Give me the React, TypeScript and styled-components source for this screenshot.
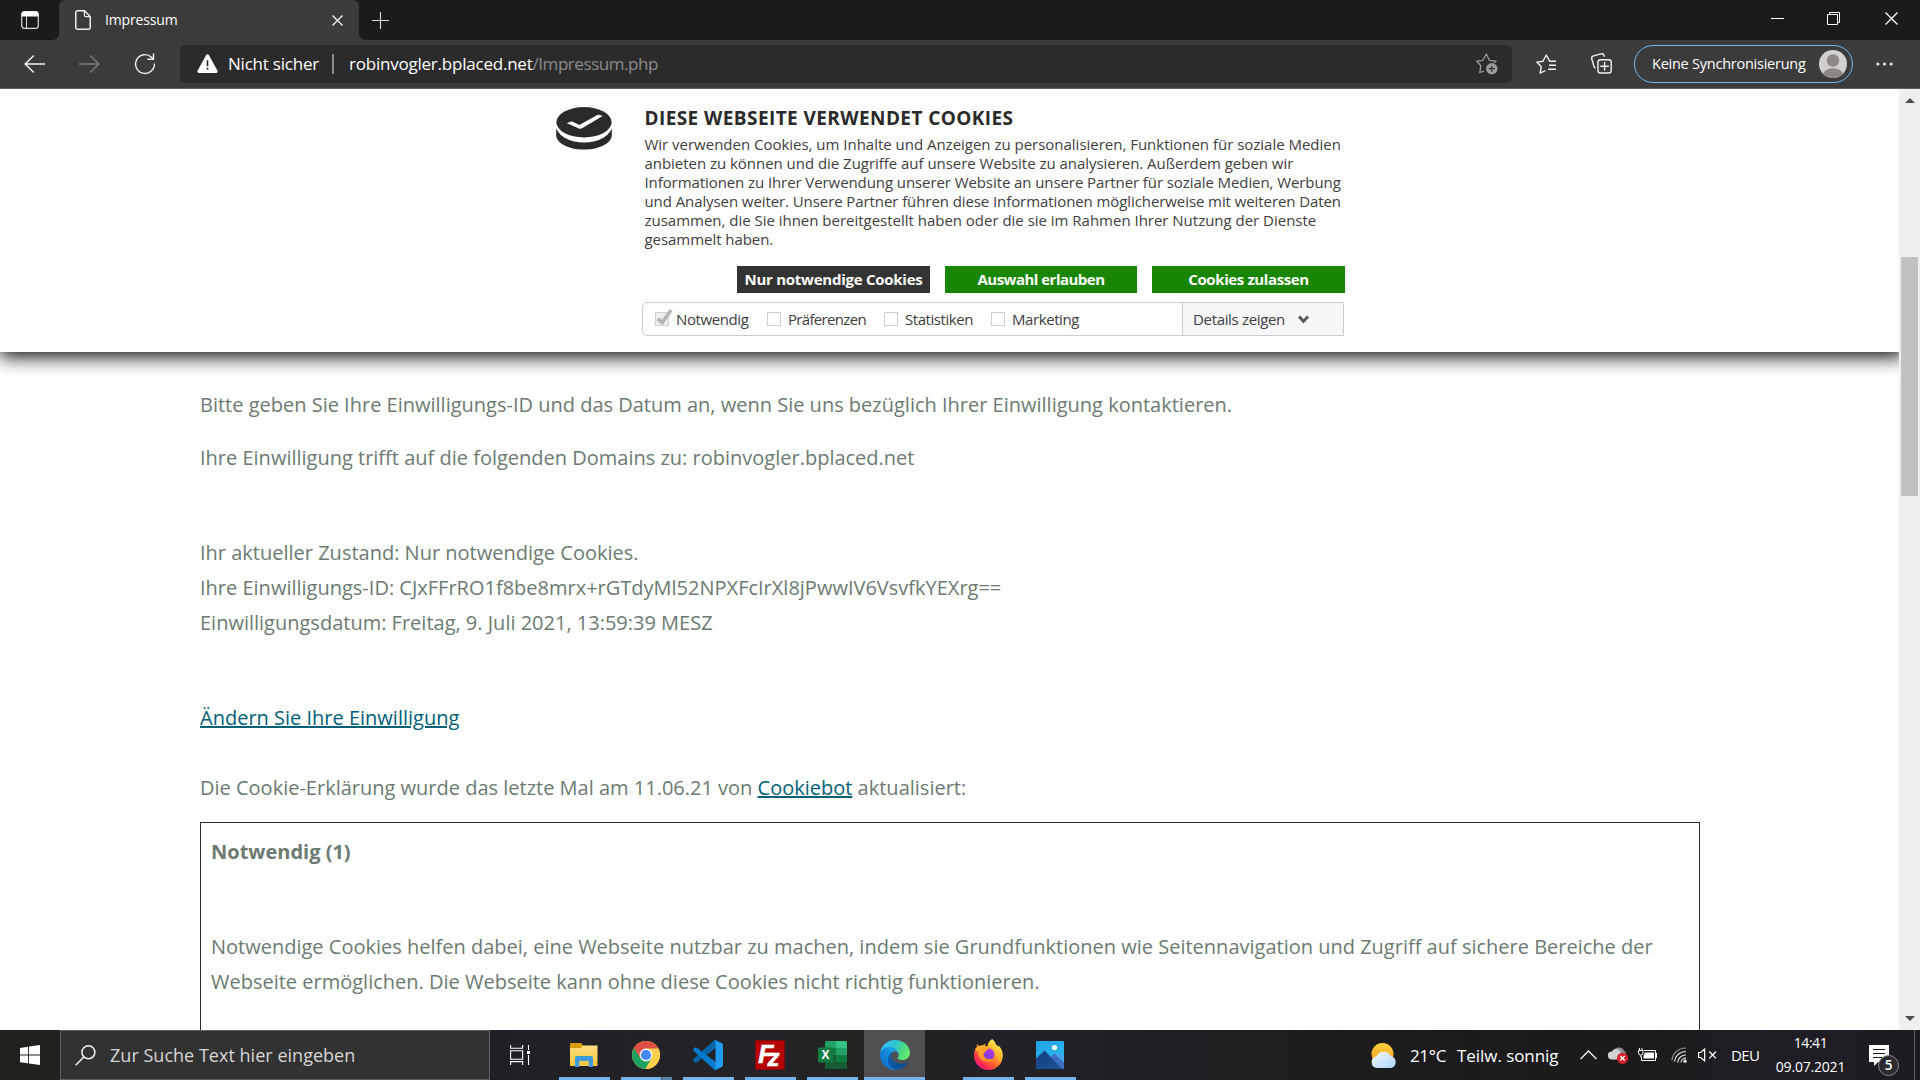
import React from "react";
import styled, { createGlobalStyle } from "styled-components";

const GlobalStyle = createGlobalStyle`
  *, *::before, *::after { box-sizing: border-box; }
  html, body { margin: 0; padding: 0; overflow: hidden; }
  body { font-family: "Open Sans", "Noto Sans", sans-serif; background: #fff; }
  p, h1, h2 { margin: 0; }
  svg { display: block; flex: none; overflow: visible; }
`;

const Screen = styled.div`
  width: 1920px;
  height: 1080px;
  display: flex;
  flex-direction: column;
  overflow: hidden;
`;

const Label = styled.span<{ $size: number; $track?: number; $color?: string }>`
  font-size: ${(p) => p.$size}px;
  letter-spacing: ${(p) => p.$track ?? 0}px;
  color: ${(p) => p.$color ?? "#fff"};
  white-space: nowrap;
`;

/* ---------- Browser chrome ---------- */

const TabStrip = styled.header`
  height: 40px;
  flex: none;
  display: flex;
  background: #1b1b1b;
`;

const TabActions = styled.div`
  width: 59px;
  display: flex;
  align-items: center;
  padding-left: 21px;
`;

const Tab = styled.div`
  position: relative;
  width: 300px;
  display: flex;
  align-items: center;
  padding: 0 16px 0 16px;
  background: #3b3b3b;
  border-radius: 6px 6px 0 0;
  &::before,
  &::after {
    content: "";
    position: absolute;
    bottom: 0;
    width: 6px;
    height: 6px;
  }
  &::before {
    left: -6px;
    background: radial-gradient(circle at 0 0, transparent 5.5px, #3b3b3b 6px);
  }
  &::after {
    right: -6px;
    background: radial-gradient(circle at 100% 0, transparent 5.5px, #3b3b3b 6px);
  }
`;

const TabTitle = styled(Label)`
  margin-left: 14px;
  padding-bottom: 2px;
  flex: 1;
`;

const NewTab = styled.div`
  display: flex;
  align-items: center;
  padding-left: 13px;
`;

const WindowControls = styled.div`
  margin-left: auto;
  display: flex;
  align-items: center;
  gap: 43px;
  padding: 0 22px 3px 0;
`;

const CloseSlot = styled.div`
  margin-left: 2px;
`;

const Toolbar = styled.nav`
  height: 49px;
  flex: none;
  display: flex;
  align-items: center;
  padding: 0 27px 1px 24px;
  background: #3b3b3b;
  border-bottom: 1px solid #606060;
`;

const NavButtons = styled.div`
  width: 156px;
  display: flex;
  align-items: center;
  gap: 34px;
`;

const AddressBar = styled.div`
  width: 1332px;
  height: 38px;
  display: flex;
  align-items: center;
  padding: 0 14px 0 17px;
  background: #2b2b2b;
  border-radius: 5px;
`;

const Insecure = styled(Label)`
  margin-left: 10px;
`;

const Separator = styled.span`
  width: 2px;
  height: 20px;
  margin: 0 15px 0 13px;
  background: #8a8a8a;
`;

const StarSlot = styled.div`
  margin-left: auto;
`;

const ToolbarActions = styled.div`
  flex: 1;
  display: flex;
  align-items: center;
  padding-left: 24px;
`;

const Collections = styled.div`
  margin-left: 34px;
`;

const Profile = styled.div`
  width: 219px;
  height: 38px;
  margin-left: 22px;
  margin-right: auto;
  display: flex;
  align-items: center;
  justify-content: space-between;
  padding: 0 5px 0 17px;
  border: 1px solid #76b9ed;
  border-radius: 19px;
`;

/* ---------- Page ---------- */

const Viewport = styled.div`
  flex: 1;
  min-height: 0;
  display: flex;
  background: #fff;
`;

const Page = styled.div`
  width: 1899px;
  overflow: hidden;
`;

const Banner = styled.section`
  position: relative;
  height: 263px;
  display: flex;
  padding: 18px 0 0 556px;
  background: #fff;
  box-shadow: 2.5px 2.5px 17.5px 2.5px #121212;
`;

const BannerBody = styled.div`
  width: 703px;
  margin-left: 30px;
`;

const BannerTitle = styled.h2`
  padding-left: 2.5px;
  font-size: 19px;
  line-height: 24px;
  font-weight: 700;
  letter-spacing: 0.41px;
  color: #2a2a2a;
  margin-top: -1px;
  white-space: nowrap;
`;

const BannerText = styled.p`
  padding-left: 2.5px;
  margin-top: 5px;
  color: #404040;
`;

const BannerLine = styled.span<{ $track: number }>`
  display: block;
  font-size: 15px;
  line-height: 19px;
  letter-spacing: ${(p) => p.$track}px;
  white-space: nowrap;
`;

const ButtonRow = styled.div`
  display: flex;
  justify-content: flex-end;
  gap: 15px;
  margin-top: 17px;
`;

const ConsentButton = styled.button<{ $dark?: boolean; $width: number; $track: number }>`
  width: ${(p) => p.$width}px;
  height: 27px;
  padding: 0 0 1px;
  border: 0;
  background: ${(p) => (p.$dark ? "#333" : "#188600")};
  color: #fff;
  font: 700 15px/26px "Open Sans", "Noto Sans", sans-serif;
  letter-spacing: ${(p) => p.$track}px;
  white-space: nowrap;
`;

const Options = styled.div`
  width: 702px;
  height: 34px;
  margin-top: 9px;
  display: flex;
  border: 1px solid #ccc;
  border-radius: 5px 0 0 5px;
`;

const Checks = styled.div`
  flex: 1;
  display: flex;
  align-items: center;
  padding-left: 12px;
`;

const Check = styled.label<{ $width: number; $gap: number }>`
  width: ${(p) => p.$width}px;
  display: flex;
  align-items: center;
  gap: ${(p) => p.$gap}px;
`;

const Details = styled.div`
  width: 161px;
  display: flex;
  align-items: center;
  gap: 13px;
  padding-left: 10px;
  background: #f6f6f9;
  border-left: 1px solid #ccc;
`;

const Declaration = styled.main`
  width: 1500px;
  margin-left: 200px;
  padding-top: 35px;
  font-size: 20px;
  line-height: 35px;
  color: #6c7a72;
`;

const Paragraph = styled.p<{ $top?: number }>`
  margin-top: ${(p) => p.$top ?? 0}px;
`;

const Link = styled.a`
  color: #006078;
  text-decoration: underline;
`;

const CategoryBox = styled.section`
  margin-top: 17px;
  height: 300px;
  padding: 11px 10px;
  border: 1px solid #2a2a2a;
`;

const CategoryTitle = styled.p`
  font-weight: 700;
`;

const Scrollbar = styled.div`
  width: 21px;
  display: flex;
  flex-direction: column;
  align-items: center;
  padding: 9px 0 9px;
  background: #f0f0f0;
`;

const Thumb = styled.div`
  width: 17px;
  height: 239px;
  margin: 154px 0 auto;
  background: #c1c1c1;
`;

/* ---------- Taskbar ---------- */

const Taskbar = styled.footer`
  height: 50px;
  flex: none;
  display: flex;
  background: linear-gradient(90deg, #22211e 0, #22211e 60px, #1f1f26 490px, #242428 780px, #232320 850px, #212127 1000px, #1c1c1d 1400px, #1b1b1c 1620px, #201e25 1800px, #1d1b20 100%);
`;

const Start = styled.div`
  width: 60px;
  display: flex;
  align-items: center;
  justify-content: center;
`;

const Search = styled.div`
  width: 430px;
  display: flex;
  align-items: center;
  gap: 14px;
  padding-left: 14px;
  background: #323232;
  border: 1px solid #5f5f5f;
`;

const TaskView = styled.div`
  width: 63px;
  display: flex;
  align-items: center;
  padding-left: 20px;
`;

const AppSlot = styled.div<{ $active?: boolean; $before?: number }>`
  width: ${(p) => (p.$active ? 61 : 62)}px;
  margin-left: ${(p) => p.$before ?? 0}px;
  display: flex;
  flex-direction: column;
  align-items: center;
  background: ${(p) => (p.$active ? "#505053" : "transparent")};
`;

const AppIcon = styled.div`
  flex: 1;
  display: flex;
  align-items: center;
  padding-top: 2px;
`;

const Underline = styled.div<{ $wide?: boolean; $stacked?: boolean }>`
  width: ${(p) => (p.$wide ? 61 : 51)}px;
  height: 3px;
  background: ${(p) => (p.$stacked ? "linear-gradient(90deg, #76b3ea 40px, #41546a 40px, #41546a 41px, #5784ab 41px)" : "#76b3ea")};
`;

const Tray = styled.div`
  margin-left: auto;
  display: flex;
  align-items: center;
`;

const Weather = styled.div`
  width: 209px;
  display: flex;
  align-items: center;
`;

const Slot = styled.div<{ $width: number }>`
  width: ${(p) => p.$width}px;
  display: flex;
  align-items: center;
`;

const Clock = styled.div`
  width: 69px;
  display: flex;
  flex-direction: column;
  align-items: center;
  line-height: 24px;
`;

const Notifications = styled.div`
  position: relative;
  width: 45px;
  height: 50px;
  margin-left: 24px;
  padding-top: 15px;
`;

const Badge = styled.span`
  position: absolute;
  left: 9px;
  top: 25px;
  width: 21px;
  height: 21px;
  border-radius: 50%;
  border: 1px solid #8c8c8c;
  background: #2b2b2d;
  color: #fff;
  font-size: 13.5px;
  line-height: 18px;
  font-weight: 600;
  text-align: center;
`;

const ShowDesktop = styled.div`
  width: 6px;
  height: 50px;
  border-left: 1px solid #606060;
`;

/* ---------- Icons ---------- */

const TabActionsIcon = () => (
  <svg width="18" height="18" viewBox="0 0 18 18" fill="none" stroke="#fff">
    <rect x="0.7" y="0.7" width="16.6" height="16.6" rx="2.8" stroke="#ddd" strokeWidth="1.2" />
    <path d="M1 5V3a2 2 0 0 1 2-2h12a2 2 0 0 1 2 2v2z" fill="#fff" />
    <path d="M5.5 5v12" stroke="#ddd" />
  </svg>
);

const FileIcon = () => (
  <svg width="16" height="20" viewBox="0 0 16 20" fill="none" stroke="#eee" strokeWidth="1.5">
    <path d="M2.6.8h7l5.6 5.7v11.1a1.7 1.7 0 0 1-1.7 1.7H2.5a1.7 1.7 0 0 1-1.7-1.7V2.5A1.7 1.7 0 0 1 2.6.8z" />
    <path d="M9.4 1v4.3a1.4 1.4 0 0 0 1.4 1.4H15" strokeWidth="1.2" />
  </svg>
);

const CrossIcon = ({ size, width = 1.2 }: { size: number; width?: number }) => (
  <svg width={size} height={size} viewBox={`0 0 ${size} ${size}`} stroke="#fff" strokeWidth={width}>
    <path d={`M.5.5L${size - 0.5} ${size - 0.5}M${size - 0.5} .5L.5 ${size - 0.5}`} />
  </svg>
);

const PlusIcon = () => (
  <svg width="17" height="17" viewBox="0 0 17 17" stroke="#ddd" strokeWidth="1.1">
    <path d="M8.5 0v17M0 8.5h17" />
  </svg>
);

const MinimizeIcon = () => (
  <svg width="13" height="13" viewBox="0 0 13 13" stroke="#fff">
    <path d="M0 6.5h13" />
  </svg>
);

const RestoreIcon = () => (
  <svg width="13" height="13" viewBox="0 0 13 13" fill="none" stroke="#fff">
    <path d="M.5 2.5h10v10H.5zM2.5 2.500V.5h10v10h-2" />
  </svg>
);

const ArrowIcon = ({ forward }: { forward?: boolean }) => (
  <svg width="21" height="18" viewBox="0 0 21 18" fill="none" stroke={forward ? "#7b7b7b" : "#f3f3f3"} strokeWidth="1.5">
    {forward ? <path d="M0 9h20M11.200.5L19.8 9l-8.600 8.500" /> : <path d="M21 9H1M9.800.5L1.200 9l8.600 8.500" />}
  </svg>
);

const ReloadIcon = () => (
  <svg width="22" height="21" viewBox="0 0 22 21" fill="none" stroke="#f0f0f0" strokeWidth="1.4">
    <path d="M20.400 10.500A9.400 9.400 0 1 1 17.500 4.200L19.400 6" />
    <path d="M13.300 6.200h6.200V.4" />
  </svg>
);

const WarningIcon = () => (
  <svg width="21" height="19" viewBox="0 0 21 19">
    <path d="M9.200.9a1.500 1.500 0 0 1 2.600 0l8.700 15.800a1.500 1.500 0 0 1-1.300 2.200H1.800a1.500 1.500 0 0 1-1.300-2.200z" fill="#fff" />
    <path d="M9.700 6.200h1.600v6H9.700zM9.600 13.700h1.800v1.800H9.600z" fill="#2b2b2b" />
  </svg>
);

const StarAddIcon = () => (
  <svg width="22" height="22" viewBox="0 0 22 22" fill="none" stroke="#9b9b9b" strokeWidth="1.300" strokeLinejoin="round">
    <path d="M8 18.200l-4.200 1.300 1-6.800L.8 8.200l6-.9L10.300 1l3 6.300 6.700.9-1.600 1.500" />
    <circle cx="15.800" cy="15.700" r="5.700" fill="#9b9b9b" stroke="none" />
    <path d="M15.800 12.700v6M12.800 15.700h6" stroke="#2b2b2b" strokeWidth="1.200" />
  </svg>
);

const FavoritesIcon = () => (
  <svg width="21" height="20" viewBox="0 0 21 20" fill="none" stroke="#f2f2f2" strokeWidth="1.400" strokeLinejoin="round">
    <path d="M20 7.200h-6.300L10.200 1 7 7.200l-6.200.9 4.500 4.600-1.100 6.500 5.300-2.700" />
    <path d="M13 11.200h7M12 15.300h8" />
  </svg>
);

const CollectionsIcon = () => (
  <svg width="21" height="21" viewBox="0 0 21 21" fill="none" stroke="#f2f2f2" strokeWidth="1.400" strokeLinejoin="round">
    <path d="M4.600 15.200a2.500 2.500 0 0 1-1.600-1.800L.8 6a2.600 2.600 0 0 1 1.800-3.200L9.800.9a2.600 2.600 0 0 1 3.200 1.800l.3 1" />
    <rect x="7" y="6.700" width="13.200" height="13.300" rx="2.600" />
    <path d="M13.600 9v8.600M9.300 13.300h8.600" />
  </svg>
);

const Avatar = () => (
  <svg width="28" height="28" viewBox="0 0 28 28">
    <clipPath id="avatar"><circle cx="14" cy="14" r="14" /></clipPath>
    <g clipPath="url(#avatar)">
      <rect width="28" height="28" fill="#d2d0ce" />
      <circle cx="14" cy="10.500" r="6.200" fill="#8d8884" />
      <ellipse cx="14" cy="26" rx="10.500" ry="7.800" fill="#8d8884" />
    </g>
  </svg>
);

const MoreIcon = () => (
  <svg width="17" height="4" viewBox="0 0 17 4" fill="#eee">
    <circle cx="1.900" cy="2" r="1.500" /><circle cx="8.500" cy="2" r="1.500" /><circle cx="15.100" cy="2" r="1.500" />
  </svg>
);

const CookiebotLogo = () => (
  <svg width="56" height="43" viewBox="0 0 56 43">
    <path d="M.2 21.500c3 6.500 14 9.700 27.800 9.700s25-3.200 27.800-9.700v6.500c0 8-12 14.600-27.800 14.600S.2 36 .2 28z" fill="#2a2a2a" />
    <ellipse cx="28" cy="18.500" rx="27.900" ry="17" fill="#fff" />
    <ellipse cx="28" cy="15.200" rx="27.600" ry="15.200" fill="#2a2a2a" />
    <path d="M10.800 16.200l3.600-1.500c.8-.3 1.600-.2 2.300.1l6.600 3.200 18-10c.7-.4 1.600-.4 2.300-.1l3 1.200-20.500 12.200c-1 .6-2.100.6-3.100.2z" fill="#fff" />
  </svg>
);

const CheckboxIcon = ({ checked }: { checked?: boolean }) => (
  <svg width={checked ? 18 : 15} height="15" viewBox={`0 0 ${checked ? 18 : 15} 15`} fill="none">
    <rect x="0.500" y="0.500" width="13" height="13" fill={checked ? "#eee" : "#fff"} stroke="#d0d0d0" />
    {checked && <path d="M2.800 6.600L7.200 10.600L16.200 -2" stroke="#b5b5b5" strokeWidth="3.600" />}
  </svg>
);

const DetailsChevron = () => (
  <svg width="11" height="9" viewBox="0 0 11 9" fill="none" stroke="#5a5a5a" strokeWidth="3">
    <path d="M1 1.500l4.500 4.800L10 1.500" />
  </svg>
);

const ScrollArrow = ({ down }: { down?: boolean }) => (
  <svg width="10" height="5" viewBox="0 0 10 5" fill="#505050">
    <path d={down ? "M0 0h10L5 5z" : "M0 5h10L5 0z"} />
  </svg>
);

const WindowsIcon = () => (
  <svg width="20" height="20" viewBox="0 0 20 20" fill="#fff">
    <path d="M0 2.900l8.100-1.200v7.800H0zM9 1.500L20 0v9.500H9zM0 10.400h8.100v7.900L0 17.200zM9 10.400h11V20L9 18.500z" />
  </svg>
);

const SearchIcon = () => (
  <svg width="21" height="21" viewBox="0 0 21 21" fill="none" stroke="#f2f2f2" strokeWidth="1.500">
    <circle cx="13.400" cy="7.300" r="6.500" />
    <path d="M8.800 12L.6 20.300" />
  </svg>
);

const TaskViewIcon = () => (
  <svg width="21" height="20" viewBox="0 0 21 20" fill="none" stroke="#fff" strokeWidth="1.100">
    <path d="M.6 0v3.300h12V0M.6 20v-3.400h12V20M.6 5.700h12v8.600H.6zM18.500 0v5M18.500 10v10" />
    <path d="M17 6h3v3h-3z" fill="#fff" stroke="none" />
  </svg>
);

const ExplorerIcon = () => (
  <svg width="28" height="24" viewBox="0 0 28 24">
    <defs>
      <linearGradient id="folder" x1="0" y1="0" x2="0" y2="1"><stop offset="0" stopColor="#ffe083" /><stop offset="1" stopColor="#f8c33c" /></linearGradient>
    </defs>
    <path d="M0 1a1 1 0 0 1 1-1h10l2 2v4H0z" fill="#dc9a0a" />
    <path d="M0 5h11l2-2.500h14.500V23H0z" fill="url(#folder)" />
    <path d="M5 24V15a2 2 0 0 1 2-2h14a2 2 0 0 1 2 2v9h-4.500v-5.500h-9V24z" fill="#3e9bdc" />
    <path d="M9.500 18h9v5h-9z" fill="#f7c948" />
  </svg>
);

const ChromeIcon = () => (
  <svg width="28" height="28" viewBox="0 0 28 28">
    <circle cx="14" cy="14" r="14" fill="#fdd04b" />
    <path d="M1.900 7A14 14 0 0 0 13.500 28l6-10.800L14 14z" fill="#1ba160" />
    <path d="M14 7.500h12.400A14 14 0 0 1 13.500 28l6.200-10.500z" fill="#fdd04b" />
    <path d="M14 7.600L26.400 7.600A14 14 0 0 0 1.900 7l6.400 10.300z" fill="#dd4f43" />
    <circle cx="14" cy="14" r="6.500" fill="#f5f5f5" />
    <circle cx="14" cy="14" r="5.100" fill="#4688f4" />
  </svg>
);

const CodeIcon = () => (
  <svg width="30" height="30" viewBox="0 0 100 100">
    <path d="M96.500 10.800L76 1a6.200 6.200 0 0 0-7.100 1.200L1.300 63.600a4.200 4.200 0 0 0 0 6.200l5.500 5a4.200 4.200 0 0 0 5.300.2L93.400 13.400C96.100 11.300 100 13.300 100 16.700v-.2a6.200 6.200 0 0 0-3.500-5.700z" fill="#0065a9" />
    <path d="M96.500 89.200L76 99a6.200 6.200 0 0 1-7.100-1.200L1.300 36.200a4.200 4.200 0 0 1 0-6.200l5.500-5a4.200 4.200 0 0 1 5.300-.2l81.300 61.700c2.700 2.100 6.600.1 6.600-3.300v.2a6.200 6.200 0 0 1-3.500 5.800z" fill="#007acc" />
    <path d="M76 99a6.200 6.200 0 0 1-7.100-1.200c2.300 2.300 6.200.7 6.200-2.600V4.800c0-3.300-3.900-4.900-6.200-2.600A6.200 6.200 0 0 1 76 1l20.500 9.800a6.200 6.200 0 0 1 3.500 5.700v67a6.200 6.200 0 0 1-3.500 5.700z" fill="#1f9cf0" />
  </svg>
);

const FileZillaText = styled.text<{ $size: number }>`
  font: italic 700 ${(p) => p.$size}px "Liberation Sans", Arial, sans-serif;
  fill: #fff;
  stroke: #fff;
  stroke-width: 0.6px;
`;

const FileZillaIcon = () => (
  <svg width="30" height="30" viewBox="0 0 30 30">
    <rect x="0.500" y="0.500" width="29" height="29" fill="#b50000" stroke="#8c0000" strokeDasharray="2 1.500" />
    <FileZillaText $size={25} x="3.200" y="22.800">F</FileZillaText>
    <FileZillaText $size={24} x="12.500" y="26.300">z</FileZillaText>
  </svg>
);

const ExcelLetter = styled.text`
  font: 700 12px "Open Sans", sans-serif;
  fill: #fff;
`;

const ExcelIcon = () => (
  <svg width="29" height="28" viewBox="0 0 29 28">
    <rect x="7" width="22" height="28" rx="1.500" fill="#21a366" />
    <path d="M18 0h9.500A1.500 1.500 0 0 1 29 1.500V7H18z" fill="#33c481" />
    <path d="M7 7h11v7H7z" fill="#107c41" />
    <path d="M18 14h11v7H18z" fill="#107c41" />
    <path d="M7 14h11v7h11v5.500a1.500 1.500 0 0 1-1.500 1.500h-19A1.500 1.500 0 0 1 7 26.500z" fill="#185c37" />
    <rect y="6.500" width="15" height="15" rx="1.300" fill="#107c41" />
    <ExcelLetter x="7.500" y="18.300" textAnchor="middle">X</ExcelLetter>
  </svg>
);

const EdgeIcon = () => (
  <svg width="30" height="30" viewBox="0 0 256 256">
    <defs>
      <linearGradient id="edgeA" x1=".2" y1=".5" x2="1" y2=".6"><stop offset="0" stopColor="#0c59a4" /><stop offset="1" stopColor="#114a8b" /></linearGradient>
      <linearGradient id="edgeB" x1=".8" y1=".3" x2=".2" y2=".9"><stop offset="0" stopColor="#1b9de2" /><stop offset=".5" stopColor="#1383d9" /><stop offset="1" stopColor="#0d6fca" /></linearGradient>
      <linearGradient id="edgeC" x1=".05" y1=".3" x2="1" y2=".6"><stop offset="0" stopColor="#35c1f1" /><stop offset=".4" stopColor="#2cc3d6" /><stop offset=".75" stopColor="#4ddb7c" /><stop offset="1" stopColor="#66eb6e" /></linearGradient>
    </defs>
    <g transform="translate(-4.630 -4.920)">
      <path fill="url(#edgeA)" d="M235.680 195.460a93.730 93.730 0 0 1-10.540 4.710 101.870 101.870 0 0 1-35.900 6.460c-47.320 0-88.540-32.550-88.540-74.320A31.480 31.480 0 0 1 117.130 105c-42.800 1.800-53.800 46.400-53.800 72.530 0 73.880 68.090 81.370 82.760 81.370 7.910 0 19.840-2.300 27-4.560l1.310-.44a128.340 128.340 0 0 0 66.600-52.800 4 4 0 0 0-5.320-5.640z" />
      <path fill="url(#edgeB)" d="M110.340 246.340A79.200 79.200 0 0 1 87.600 225a80.720 80.720 0 0 1 29.530-120c3.120-1.470 8.450-4.130 15.540-4a32.350 32.350 0 0 1 25.690 13 31.880 31.880 0 0 1 6.360 18.660c0-.21 24.460-79.600-80-79.600-43.900 0-80 41.660-80 78.210a130.150 130.150 0 0 0 12.110 56 128 128 0 0 0 156.380 67.110 75.550 75.550 0 0 1-62.780-8z" />
      <path fill="url(#edgeC)" d="M156.940 153.780c-.81 1.050-3.300 2.500-3.300 5.660 0 2.610 1.700 5.120 4.720 7.230 14.380 10 41.490 8.680 41.560 8.680a59.560 59.560 0 0 0 30.270-8.350A61.380 61.380 0 0 0 260.620 114c.26-22.410-8-37.310-11.340-43.910C228.080 28.760 182.350 4.920 132.610 4.920a128 128 0 0 0-128 126.200c.48-36.540 36.800-66.050 80-66.050 3.500 0 23.460.34 42 10.070 16.340 8.580 24.900 18.940 30.850 29.210 6.180 10.670 7.280 24.150 7.280 29.520s-2.740 13.330-7.800 19.910z" />
    </g>
  </svg>
);

const FirefoxIcon = () => (
  <svg width="29" height="31" viewBox="0 0 29 31">
    <defs>
      <linearGradient id="foxBody" x1=".85" y1=".1" x2=".2" y2=".95"><stop offset="0" stopColor="#fff14a" /><stop offset=".35" stopColor="#ffb02e" /><stop offset=".6" stopColor="#ff6a2b" /><stop offset=".85" stopColor="#ff2a55" /><stop offset="1" stopColor="#e31587" /></linearGradient>
      <linearGradient id="foxCore" x1=".7" y1="0" x2=".3" y2="1"><stop offset="0" stopColor="#b833e1" /><stop offset="1" stopColor="#6b45dc" /></linearGradient>
      <linearGradient id="foxHead" x1="0" y1="0" x2="1" y2="1"><stop offset="0" stopColor="#ffbd2e" /><stop offset="1" stopColor="#ff7a25" /></linearGradient>
    </defs>
    <path d="M18.200 0c2.200 1.800 3.500 4 4 6 1 .3 1.700 1 2.200 1.800.2-.5.200-1 .1-1.500 2.700 2.800 4.300 6.300 4.300 10.200A14.200 14.200 0 0 1 14.500 31 14.300 14.300 0 0 1 0 16.500c0-3.500 1-6.500 2.700-8.800L3 4.800l2 2.100c1.300-.6 2.700-.7 4-.5l4.500.8C13.500 4.500 15.300 2 18.200 0z" fill="url(#foxBody)" />
    <circle cx="14.300" cy="15.500" r="6.200" fill="url(#foxCore)" />
    <path d="M1 11c1.500-3 4-4.600 7.500-4.300.8-1 2-1.700 3.200-2-.8 1.300-.7 2.700.2 3.500 1 .4 2.300.5 3.500.4-.2 1.400-1.400 2.300-3.200 3-.2 1.300-1.700 1.800-2.700 3 .2 3.800 2.400 5.600 6 5.500 2.500 0 4-1.500 5.800-1-1.700 3.500-5 4.600-8.300 4C6.500 22 4 17.500 4.500 12.800z" fill="url(#foxHead)" />
  </svg>
);

const PhotosIcon = () => (
  <svg width="28" height="28" viewBox="0 0 28 28">
    <defs>
      <linearGradient id="sky" x1="0" y1="0" x2="1" y2="1"><stop offset="0" stopColor="#22a2e3" /><stop offset="1" stopColor="#2fbaf0" /></linearGradient>
      <linearGradient id="hill" x1="0" y1="0" x2="1" y2="1"><stop offset="0" stopColor="#153f7e" /><stop offset="1" stopColor="#1d5499" /></linearGradient>
    </defs>
    <rect width="28" height="28" rx="1" fill="url(#sky)" />
    <path d="M14 17l4.500-4.500 9.500 9.300V28H14z" fill="#3c6fc4" />
    <path d="M18.500 12.500L28 21.800V14z" fill="#7b8de0" opacity=".35" />
    <path d="M0 17.500L8.500 9.500 26.500 28H0z" fill="url(#hill)" />
    <circle cx="18.500" cy="6.500" r="2.600" fill="#fff" />
  </svg>
);

const WeatherIcon = () => (
  <svg width="26" height="25" viewBox="0 0 26 25">
    <defs>
      <linearGradient id="sun" x1="0" y1="0" x2="0" y2="1"><stop offset="0" stopColor="#ffcf3f" /><stop offset="1" stopColor="#f59a1c" /></linearGradient>
      <linearGradient id="cloud" x1="0" y1="0" x2="1" y2="1"><stop offset="0" stopColor="#f5fbff" /><stop offset="1" stopColor="#aed4f5" /></linearGradient>
    </defs>
    <circle cx="11.500" cy="11" r="11" fill="url(#sun)" />
    <path d="M6 25a5.800 5.800 0 0 1-.6-11.500A8 8 0 0 1 20 13.300 6 6 0 0 1 20 25z" fill="url(#cloud)" />
  </svg>
);

const TrayChevron = () => (
  <svg width="17" height="10" viewBox="0 0 17 10" fill="none" stroke="#f0f0f0" strokeWidth="1.400">
    <path d="M.6 9L8.500 1l7.900 8" />
  </svg>
);

const CloudErrorIcon = () => (
  <svg width="21" height="18" viewBox="0 0 21 18">
    <path d="M5 6a6 6 0 0 1 11-1.500A4.500 4.500 0 0 1 16 12H8z" fill="#8f8f8f" />
    <path d="M4 13.500a4 4 0 0 1-.2-8A5.500 5.500 0 0 1 11 4l5 8-2 1.500z" fill="#d2d2d2" />
    <circle cx="14.500" cy="12.300" r="5.600" fill="#d8202c" />
    <path d="M12.300 10.100l4.400 4.400M16.700 10.100l-4.400 4.400" stroke="#fff" strokeWidth="1.400" />
  </svg>
);

const BatteryIcon = () => (
  <svg width="20" height="14" viewBox="0 0 20 14" fill="none" stroke="#fff">
    <path d="M6 2.500h11.500v10h-14V9" />
    <path d="M7 4.500h9v6H5.500V8z" fill="#fff" stroke="none" />
    <path d="M18.500 5v5" />
    <path d="M.5 2.500h4.500v2.500a2.200 2.200 0 0 1-4.400 0zM1.500 0v2M4 0v2M2.700 7.500V9h1" />
  </svg>
);

const WifiIcon = () => (
  <svg width="16" height="16" viewBox="0 0 16 16" fill="none" stroke="#ddd" strokeWidth="1.200">
    <path d="M1 13.500C1.300 6.500 7 1 15 1" stroke="#999" />
    <path d="M3.500 14.500C4 9 8.500 4.500 15 4.500M6.700 15.500C7 11.500 10 8 15 8M10 15.500c0-2.200 2-4.300 5-4.300" />
    <circle cx="14" cy="14.200" r="1.600" fill="#fff" stroke="none" />
  </svg>
);

const MutedIcon = () => (
  <svg width="19" height="14" viewBox="0 0 19 14" fill="none" stroke="#fff" strokeWidth="1.200">
    <path d="M.6 4.500h2.200L6.600 1v12L2.800 9.500H.6zM11.300 3.500l6.600 6.800M17.900 3.500l-6.600 6.800" />
  </svg>
);

const NotificationIcon = () => (
  <svg width="20" height="21" viewBox="0 0 20 21">
    <path d="M0 0h20v17H9l-4 4v-4H0z" fill="#fff" />
    <path d="M4 4.500h12M4 8.500h12M4 12.500h9" stroke="#1d1b20" strokeWidth="1.200" />
  </svg>
);

/* ---------- Content ---------- */

const bannerLines: [string, number][] = [
  ["Wir verwenden Cookies, um Inhalte und Anzeigen zu personalisieren, Funktionen für soziale Medien", -0.014],
  ["anbieten zu können und die Zugriffe auf unsere Website zu analysieren. Außerdem geben wir", -0.033],
  ["Informationen zu Ihrer Verwendung unserer Website an unsere Partner für soziale Medien, Werbung", -0.084],
  ["und Analysen weiter. Unsere Partner führen diese Informationen möglicherweise mit weiteren Daten", -0.084],
  ["zusammen, die Sie ihnen bereitgestellt haben oder die sie im Rahmen Ihrer Nutzung der Dienste", -0.015],
  ["gesammelt haben.", -0.05],
];

const apps = [
  { icon: <ExplorerIcon /> },
  { icon: <ChromeIcon />, stacked: true },
  { icon: <CodeIcon /> },
  { icon: <FileZillaIcon /> },
  { icon: <ExcelIcon /> },
  { icon: <EdgeIcon />, active: true, before: 1 },
  { icon: <FirefoxIcon />, before: 32 },
  { icon: <PhotosIcon /> },
];

const text = "#404040";

export default function App() {
  return (
    <Screen>
      <GlobalStyle />
      <TabStrip>
        <TabActions><TabActionsIcon /></TabActions>
        <Tab>
          <FileIcon />
          <TabTitle $size={14} $track={-0.15}>Impressum</TabTitle>
          <CrossIcon size={11} />
        </Tab>
        <NewTab><PlusIcon /></NewTab>
        <WindowControls>
          <MinimizeIcon />
          <RestoreIcon />
          <CloseSlot><CrossIcon size={13} width={1.3} /></CloseSlot>
        </WindowControls>
      </TabStrip>

      <Toolbar>
        <NavButtons>
          <ArrowIcon />
          <ArrowIcon forward />
          <ReloadIcon />
        </NavButtons>
        <AddressBar>
          <WarningIcon />
          <Insecure $size={17} $track={-0.216}>Nicht sicher</Insecure>
          <Separator />
          <Label $size={17} $track={-0.223}>robinvogler.bplaced.net</Label>
          <Label $size={17} $track={-0.44} $color="#8c8c8c">/Impressum.php</Label>
          <StarSlot><StarAddIcon /></StarSlot>
        </AddressBar>
        <ToolbarActions>
          <FavoritesIcon />
          <Collections><CollectionsIcon /></Collections>
          <Profile>
            <Label $size={14.5} $track={-0.24}>Keine Synchronisierung</Label>
            <Avatar />
          </Profile>
          <MoreIcon />
        </ToolbarActions>
      </Toolbar>

      <Viewport>
        <Page>
          <Banner>
            <CookiebotLogo />
            <BannerBody>
              <BannerTitle>DIESE WEBSEITE VERWENDET COOKIES</BannerTitle>
              <BannerText>
                {bannerLines.map(([line, track]) => (
                  <BannerLine key={line} $track={track}>{line}</BannerLine>
                ))}
              </BannerText>
              <ButtonRow>
                <ConsentButton $dark $width={193} $track={-0.255}>Nur notwendige Cookies</ConsentButton>
                <ConsentButton $width={192} $track={-0.517}>Auswahl erlauben</ConsentButton>
                <ConsentButton $width={193} $track={-0.386}>Cookies zulassen</ConsentButton>
              </ButtonRow>
              <Options>
                <Checks>
                  <Check $width={112} $gap={3}><CheckboxIcon checked /><Label $size={15} $track={-0.391} $color={text}>Notwendig</Label></Check>
                  <Check $width={117} $gap={6}><CheckboxIcon /><Label $size={15} $track={-0.669} $color={text}>Präferenzen</Label></Check>
                  <Check $width={107} $gap={6}><CheckboxIcon /><Label $size={15} $track={-0.439} $color={text}>Statistiken</Label></Check>
                  <Check $width={90} $gap={6}><CheckboxIcon /><Label $size={15} $track={-0.415} $color={text}>Marketing</Label></Check>
                </Checks>
                <Details>
                  <Label $size={15} $track={-0.33} $color={text}>Details zeigen</Label>
                  <DetailsChevron />
                </Details>
              </Options>
            </BannerBody>
          </Banner>

          <Declaration>
            <Paragraph>Bitte geben Sie Ihre Einwilligungs-ID und das Datum an, wenn Sie uns bezüglich Ihrer Einwilligung kontaktieren.</Paragraph>
            <Paragraph $top={18}>Ihre Einwilligung trifft auf die folgenden Domains zu: robinvogler.bplaced.net</Paragraph>
            <Paragraph $top={60}>
              Ihr aktueller Zustand: Nur notwendige Cookies.<br />
              Ihre Einwilligungs-ID: CJxFFrRO1f8be8mrx+rGTdyMl52NPXFcIrXl8jPwwIV6VsvfkYEXrg==<br />
              Einwilligungsdatum: Freitag, 9. Juli 2021, 13:59:39 MESZ
            </Paragraph>
            <Paragraph $top={60}><Link>Ändern Sie Ihre Einwilligung</Link></Paragraph>
            <Paragraph $top={35}>Die Cookie-Erklärung wurde das letzte Mal am 11.06.21 von <Link>Cookiebot</Link> aktualisiert:</Paragraph>
            <CategoryBox>
              <CategoryTitle>Notwendig (1)</CategoryTitle>
              <Paragraph $top={60}>
                Notwendige Cookies helfen dabei, eine Webseite nutzbar zu machen, indem sie Grundfunktionen wie Seitennavigation und Zugriff auf sichere Bereiche der Webseite ermöglichen. Die Webseite kann ohne diese Cookies nicht richtig funktionieren.
              </Paragraph>
            </CategoryBox>
          </Declaration>
        </Page>
        <Scrollbar>
          <ScrollArrow />
          <Thumb />
          <ScrollArrow down />
        </Scrollbar>
      </Viewport>

      <Taskbar>
        <Start><WindowsIcon /></Start>
        <Search>
          <SearchIcon />
          <Label $size={18} $track={0.02} $color="#d6d6d6">Zur Suche Text hier eingeben</Label>
        </Search>
        <TaskView><TaskViewIcon /></TaskView>
        {apps.map((app, i) => (
          <AppSlot key={i} $active={app.active} $before={app.before}>
            <AppIcon>{app.icon}</AppIcon>
            <Underline $wide={app.active} $stacked={app.stacked} />
          </AppSlot>
        ))}
        <Tray>
          <Weather>
            <Slot $width={39}><WeatherIcon /></Slot>
            <Slot $width={47}><Label $size={17} $track={-0.357}>21°C</Label></Slot>
            <Label $size={17} $track={-0.058}>Teilw. sonnig</Label>
          </Weather>
          <Slot $width={28}><TrayChevron /></Slot>
          <Slot $width={30}><CloudErrorIcon /></Slot>
          <Slot $width={33}><BatteryIcon /></Slot>
          <Slot $width={27}><WifiIcon /></Slot>
          <Slot $width={33}><MutedIcon /></Slot>
          <Slot $width={45}><Label $size={15} $track={-0.6}>DEU</Label></Slot>
          <Clock>
            <Label $size={14} $track={-0.45}>14:41</Label>
            <Label $size={14} $track={-0.2}>09.07.2021</Label>
          </Clock>
          <Notifications>
            <NotificationIcon />
            <Badge>5</Badge>
          </Notifications>
          <ShowDesktop />
        </Tray>
      </Taskbar>
    </Screen>
  );
}
